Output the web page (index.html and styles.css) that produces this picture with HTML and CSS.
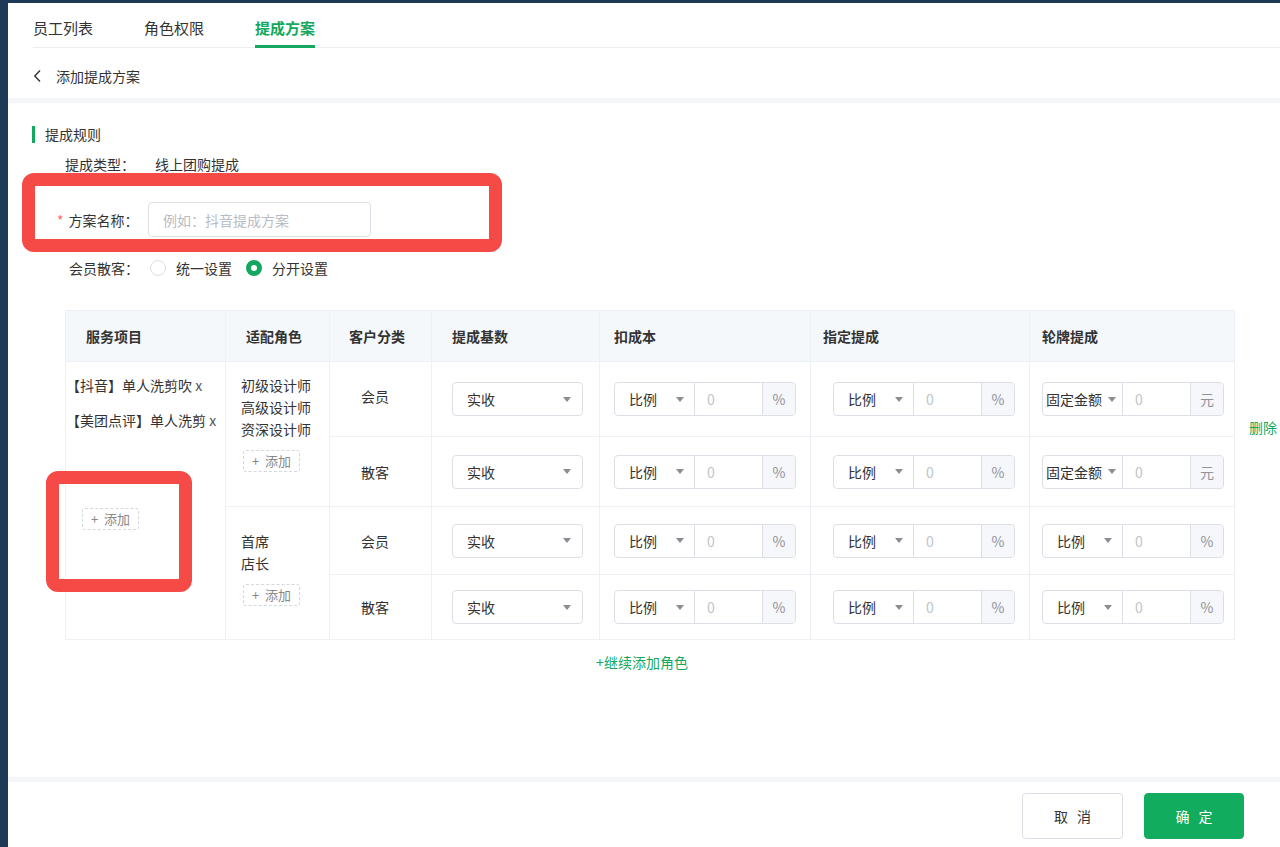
FILE: index.html
```html
<!DOCTYPE html>
<html lang="zh-CN">
<head>
    <meta charset="UTF-8">
    <meta name="viewport" content="width=device-width, initial-scale=1.0">
    <title>添加提成方案</title>
    <link rel="stylesheet" href="styles.css">
</head>
<body>
    <div class="app">
        <div class="top-panel">
            <div class="tabs">
                <div class="tab">员工列表</div>
                <div class="tab">角色权限</div>
                <div class="tab active">提成方案</div>
            </div>
            <div class="back-row">
                <span class="back-arrow">
                    <svg width="9" height="14" viewBox="0 0 9 14"><path d="M7 1.5 L1.8 7 L7 12.5" fill="none" stroke="#333" stroke-width="1.4"/></svg>
                </span>
                <span>添加提成方案</span>
            </div>
        </div>

        <div class="main-panel">
            <div class="section-title">提成规则</div>

            <div class="form-row type-row">
                <span class="label">提成类型：</span>
                <span class="value">线上团购提成</span>
            </div>

            <div class="form-row name-row">
                <span class="label"><span class="required">*</span>方案名称：</span>
                <input class="text-input" type="text" placeholder="例如：抖音提成方案">
            </div>

            <div class="form-row radio-row">
                <span class="label">会员散客：</span>
                <label class="radio"><span class="radio-dot"></span>统一设置</label>
                <label class="radio checked"><span class="radio-dot"></span>分开设置</label>
            </div>

            <div class="table-area">
                <table class="rule-table">
                    <colgroup>
                        <col style="width:160px">
                        <col style="width:104px">
                        <col style="width:102px">
                        <col style="width:168px">
                        <col style="width:211px">
                        <col style="width:219px">
                        <col style="width:205px">
                    </colgroup>
                    <thead>
                        <tr>
                            <th class="c-service">服务项目</th>
                            <th class="c-role">适配角色</th>
                            <th class="c-cust">客户分类</th>
                            <th class="c-base">提成基数</th>
                            <th class="c-cost">扣成本</th>
                            <th class="c-assign">指定提成</th>
                            <th class="c-turn">轮牌提成</th>
                        </tr>
                    </thead>
                    <tbody>
                        <tr class="r1">
                            <td class="service-cell" rowspan="4">
                                <div class="service-item">【抖音】单人洗剪吹 <span class="remove">x</span></div>
                                <div class="service-item">【美团点评】单人洗剪 <span class="remove">x</span></div>
                                <div class="add-btn service-add">+&nbsp;&nbsp;添加</div>
                            </td>
                            <td class="role-cell" rowspan="2">
                                <div class="role-list">初级设计师<br>高级设计师<br>资深设计师</div>
                                <div class="add-btn">+&nbsp;&nbsp;添加</div>
                            </td>
                            <td class="cust-cell">会员</td>
                            <td class="c-base"><div class="select">实收<span class="caret"></span></div></td>
                            <td class="c-cost"><div class="combo"><div class="combo-select">比例<span class="caret"></span></div><div class="combo-input">0</div><div class="combo-unit">%</div></div></td>
                            <td class="c-assign"><div class="combo"><div class="combo-select">比例<span class="caret"></span></div><div class="combo-input">0</div><div class="combo-unit">%</div></div></td>
                            <td class="c-turn"><div class="combo"><div class="combo-select wide">固定金额<span class="caret"></span></div><div class="combo-input">0</div><div class="combo-unit">元</div></div></td>
                        </tr>
                        <tr class="r2">
                            <td class="cust-cell">散客</td>
                            <td class="c-base"><div class="select">实收<span class="caret"></span></div></td>
                            <td class="c-cost"><div class="combo"><div class="combo-select">比例<span class="caret"></span></div><div class="combo-input">0</div><div class="combo-unit">%</div></div></td>
                            <td class="c-assign"><div class="combo"><div class="combo-select">比例<span class="caret"></span></div><div class="combo-input">0</div><div class="combo-unit">%</div></div></td>
                            <td class="c-turn"><div class="combo"><div class="combo-select wide">固定金额<span class="caret"></span></div><div class="combo-input">0</div><div class="combo-unit">元</div></div></td>
                        </tr>
                        <tr class="r3">
                            <td class="role-cell role-cell-2" rowspan="2">
                                <div class="role-list">首席<br>店长</div>
                                <div class="add-btn">+&nbsp;&nbsp;添加</div>
                            </td>
                            <td class="cust-cell">会员</td>
                            <td class="c-base"><div class="select">实收<span class="caret"></span></div></td>
                            <td class="c-cost"><div class="combo"><div class="combo-select">比例<span class="caret"></span></div><div class="combo-input">0</div><div class="combo-unit">%</div></div></td>
                            <td class="c-assign"><div class="combo"><div class="combo-select">比例<span class="caret"></span></div><div class="combo-input">0</div><div class="combo-unit">%</div></div></td>
                            <td class="c-turn"><div class="combo"><div class="combo-select">比例<span class="caret"></span></div><div class="combo-input">0</div><div class="combo-unit">%</div></div></td>
                        </tr>
                        <tr class="r4">
                            <td class="cust-cell">散客</td>
                            <td class="c-base"><div class="select">实收<span class="caret"></span></div></td>
                            <td class="c-cost"><div class="combo"><div class="combo-select">比例<span class="caret"></span></div><div class="combo-input">0</div><div class="combo-unit">%</div></div></td>
                            <td class="c-assign"><div class="combo"><div class="combo-select">比例<span class="caret"></span></div><div class="combo-input">0</div><div class="combo-unit">%</div></div></td>
                            <td class="c-turn"><div class="combo"><div class="combo-select">比例<span class="caret"></span></div><div class="combo-input">0</div><div class="combo-unit">%</div></div></td>
                        </tr>
                    </tbody>
                </table>
                <div class="row-actions">
                    <span class="link">删除</span>
                </div>
            </div>

            <div class="add-role"><span class="link">+继续添加角色</span></div>

            <!-- 标注框 -->
            <div class="mark mark-name"></div>
            <div class="mark mark-add"></div>
        </div>

        <div class="footer">
            <button class="btn">取 消</button>
            <button class="btn primary">确 定</button>
        </div>
    </div>
</body>
</html>
```

FILE: styles.css
```css
* {
    box-sizing: border-box;
}
body {
    margin: 0;
    background-color: #1d3a57;
    font-family: "Noto Sans CJK SC", "Noto Sans", sans-serif;
    font-size: 14px;
    color: #333;
}
.app {
    margin: 3px 0 0 8px;
    height: 844px;
    background-color: #f5f6f7;
    display: flex;
    flex-direction: column;
}
.top-panel {
    background: #fff;
    height: 95px;
}
.tabs {
    display: flex;
    gap: 51px;
    margin-left: 25px;
    height: 45px;
    border-bottom: 1px solid #ebedf0;
}
.tab {
    font-size: 15px;
    line-height: 20px;
    padding-top: 15px;
    color: #333;
    height: 45px;
}
.tab.active {
    color: #13a85e;
    font-weight: 600;
    border-bottom: 3px solid #13a85e;
    margin-bottom: -1px;
}
.back-row {
    display: flex;
    align-items: center;
    height: 49px;
    padding: 7px 0 0 25px;
    gap: 14px;
}
.back-arrow {
    display: flex;
    width: 9px;
}
.main-panel {
    position: relative;
    background: #fff;
    margin-top: 5px;
    height: 674px;
    padding-top: 23px;
}
.section-title {
    margin-left: 24px;
    padding-left: 10px;
    border-left: 3px solid #13a85e;
    height: 17px;
    line-height: 17px;
}
.form-row {
    display: flex;
    align-items: center;
}
.type-row {
    margin-top: 11px;
    height: 20px;
    padding-left: 57px;
}
.type-row .label {
    width: 90px;
}
.name-row {
    margin-top: 28px;
    padding-left: 49px;
}
.name-row .label {
    width: 91px;
}
.required {
    color: #f56c6c;
    margin-right: 5px;
}
.text-input {
    width: 223px;
    height: 35px;
    border: 1px solid #dcdfe6;
    border-radius: 4px;
    padding: 0 14px;
    font: inherit;
    color: #333;
    outline: none;
}
.text-input::placeholder {
    color: #b8bcc4;
}
.radio-row {
    margin-top: 21px;
    height: 20px;
    padding-left: 61px;
}
.radio-row .label {
    width: 81px;
}
.radio {
    display: flex;
    align-items: center;
    gap: 10px;
    margin-right: 14px;
}
.radio-dot {
    width: 16px;
    height: 16px;
    border-radius: 50%;
    border: 1px solid #dcdfe6;
    background: #fff;
}
.radio.checked .radio-dot {
    border: 5px solid #13a85e;
}
.table-area {
    display: flex;
    margin-top: 32px;
    margin-left: 57px;
}
.rule-table {
    width: 1169px;
    table-layout: fixed;
    border-collapse: collapse;
    border: 1px solid #edf0f5;
}
.rule-table th {
    height: 51px;
    background-color: #f5f8fb;
    font-weight: 600;
    text-align: left;
    border-left: 1px solid #edf0f5;
    color: #333;
}
.rule-table td {
    border: 1px solid #edf0f5;
    vertical-align: middle;
}
.r1 { height: 75px; }
.r2 { height: 70px; }
.r3 { height: 68px; }
.r4 { height: 65px; }
.c-service { padding-left: 20px; }
.c-role { padding-left: 20px; }
.c-cust { padding-left: 19px; }
.c-base { padding-left: 20px; }
.c-cost { padding-left: 14px; }
.c-assign { padding-left: 12px; }
.rule-table td.c-assign { padding-left: 22px; }
.c-turn { padding-left: 12px; }
.rule-table td.service-cell {
    vertical-align: top;
    padding: 12px 0 0 0;
}
.service-item {
    line-height: 22px;
    margin-bottom: 13px;
    white-space: nowrap;
}
.remove {
    color: #555;
}
.add-btn {
    display: inline-block;
    height: 22px;
    line-height: 20px;
    padding: 0 8px;
    border: 1px dashed #d4d7dc;
    border-radius: 3px;
    font-size: 13px;
    color: #888;
}
.service-add {
    margin: 64px 0 0 16px;
}
.rule-table td.role-cell {
    vertical-align: top;
    padding: 12px 0 0 15px;
}
.rule-table td.role-cell-2 {
    padding-top: 23px;
}
.role-list {
    line-height: 22px;
}
.role-cell .add-btn {
    margin: 10px 0 0 2px;
}
.rule-table td.cust-cell {
    text-align: center;
    padding-right: 12px;
}
.r1 td.cust-cell {
    padding-bottom: 8px;
}
.select {
    width: 131px;
    height: 34px;
    border: 1px solid #dcdfe6;
    border-radius: 4px;
    display: flex;
    align-items: center;
    justify-content: space-between;
    padding: 0 11px 0 14px;
    background: #fff;
}
.caret {
    width: 0;
    height: 0;
    border-left: 4px solid transparent;
    border-right: 4px solid transparent;
    border-top: 5px solid #8a8d93;
}
.combo {
    display: flex;
    width: 182px;
    height: 34px;
    border: 1px solid #dcdfe6;
    border-radius: 4px;
    overflow: hidden;
}
.combo-select {
    width: 80px;
    display: flex;
    align-items: center;
    justify-content: space-between;
    padding: 0 10px 0 14px;
    border-right: 1px solid #dcdfe6;
}
.combo-select.wide {
    padding: 0 6px 0 3px;
}
.combo-input {
    width: 67px;
    display: flex;
    align-items: center;
    padding-left: 12px;
    color: #c0c4cc;
}
.combo-unit {
    flex: 1;
    display: flex;
    align-items: center;
    justify-content: center;
    background-color: #f5f7fa;
    border-left: 1px solid #dcdfe6;
    color: #909399;
}
.row-actions {
    padding: 107px 0 0 14px;
}
.link {
    color: #13a85e;
    line-height: 20px;
}
.add-role {
    width: 1169px;
    margin: 12px 0 0 57px;
    text-align: center;
    padding-right: 15px;
}
.mark {
    position: absolute;
    border: 13px solid #f54a46;
    border-radius: 12px;
}
.mark-name {
    left: 14px;
    top: 70px;
    width: 480px;
    height: 79px;
}
.mark-add {
    left: 38px;
    top: 368px;
    width: 146px;
    height: 121px;
}
.footer {
    margin-top: 5px;
    flex: 1;
    background: #fff;
    display: flex;
    justify-content: flex-end;
    gap: 21px;
    padding: 11px 36px 0 0;
}
.btn {
    width: 101px;
    height: 46px;
    border: 1px solid #dcdfe6;
    border-radius: 4px;
    background: #fff;
    font: inherit;
    letter-spacing: 3px;
    text-indent: 3px;
    color: #333;
}
.btn.primary {
    width: 100px;
    background-color: #12ac5e;
    border-color: #12ac5e;
    color: #fff;
}
```
